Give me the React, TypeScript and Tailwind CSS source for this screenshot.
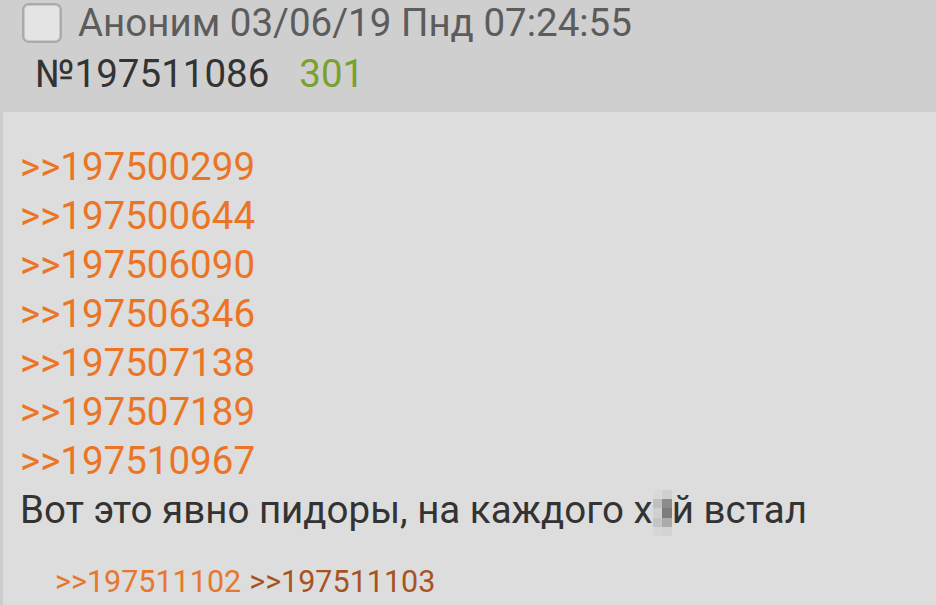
const links = [
  "197500299",
  "197500644",
  "197506090",
  "197506346",
  "197507138",
  "197507189",
  "197510967",
];

const cells = [
  "bg-[#d9d9d9]", "bg-[#d0d0d0]",
  "bg-[#c0c0c0]", "bg-[#8c8c8c]",
  "bg-[#d0d0d0]", "bg-[#7c7c7c]",
  "bg-[#c4c4c4]", "bg-[#ababab]",
  "bg-[#d6d6d6]", "bg-[#d3d3d3]",
];

function Censor() {
  return (
    <span className="inline-block overflow-hidden align-[-13px] w-[19px] h-[46px] leading-none">
      <span className="flex flex-wrap w-[19px]">
        {cells.map((c, i) => (
          <span key={i} className={`block w-[9.5px] h-[9.2px] ${c}`} />
        ))}
      </span>
    </span>
  );
}

export default function App() {
  return (
    <div className="w-[936px] h-[605px] overflow-hidden bg-[#dddddd] font-['Roboto',sans-serif]">
      <div className="bg-[#cfcfcf] h-[112px] pt-[2px]">
        <div className="flex items-center h-[42px] pl-[22px]">
          <div className="w-[40px] h-[40px] rounded-[7px] border-2 border-[#aaaaaa] bg-[#e4e4e4] shadow-[inset_0_0_0_1px_#c8c8c8]" />
          <span className="ml-[16px] text-[38.5px] leading-none text-[#5c5c5c]">
            Аноним 03/06/19 Пнд 07:24:55
          </span>
        </div>
        <div className="flex items-center h-[60px] pl-[35px] text-[38.5px] leading-none">
          <span className="text-[#333333]">№197511086</span>
          <span className="ml-[30px] text-[#7aa12f]">301</span>
        </div>
      </div>
      <div className="border-l-[3px] border-[#cdcdcd] h-[493px] pt-[30px] pl-[17px]">
        <div className="flex flex-col text-[38.5px] leading-[49px] text-[#eb7525]">
          {links.map((l) => (
            <span key={l}>&gt;&gt;{l}</span>
          ))}
        </div>
        <div className="h-[49px] text-[38.5px] leading-[49px] text-[#333333] whitespace-nowrap">
          Вот это явно пидоры, на каждого х<Censor />й встал
        </div>
        <div className="mt-[33px] pl-[35px] text-[30.5px] leading-none flex gap-[8px]">
          <span className="text-[#e6782d]">&gt;&gt;197511102</span>
          <span className="text-[#a8531f]">&gt;&gt;197511103</span>
        </div>
      </div>
    </div>
  );
}
